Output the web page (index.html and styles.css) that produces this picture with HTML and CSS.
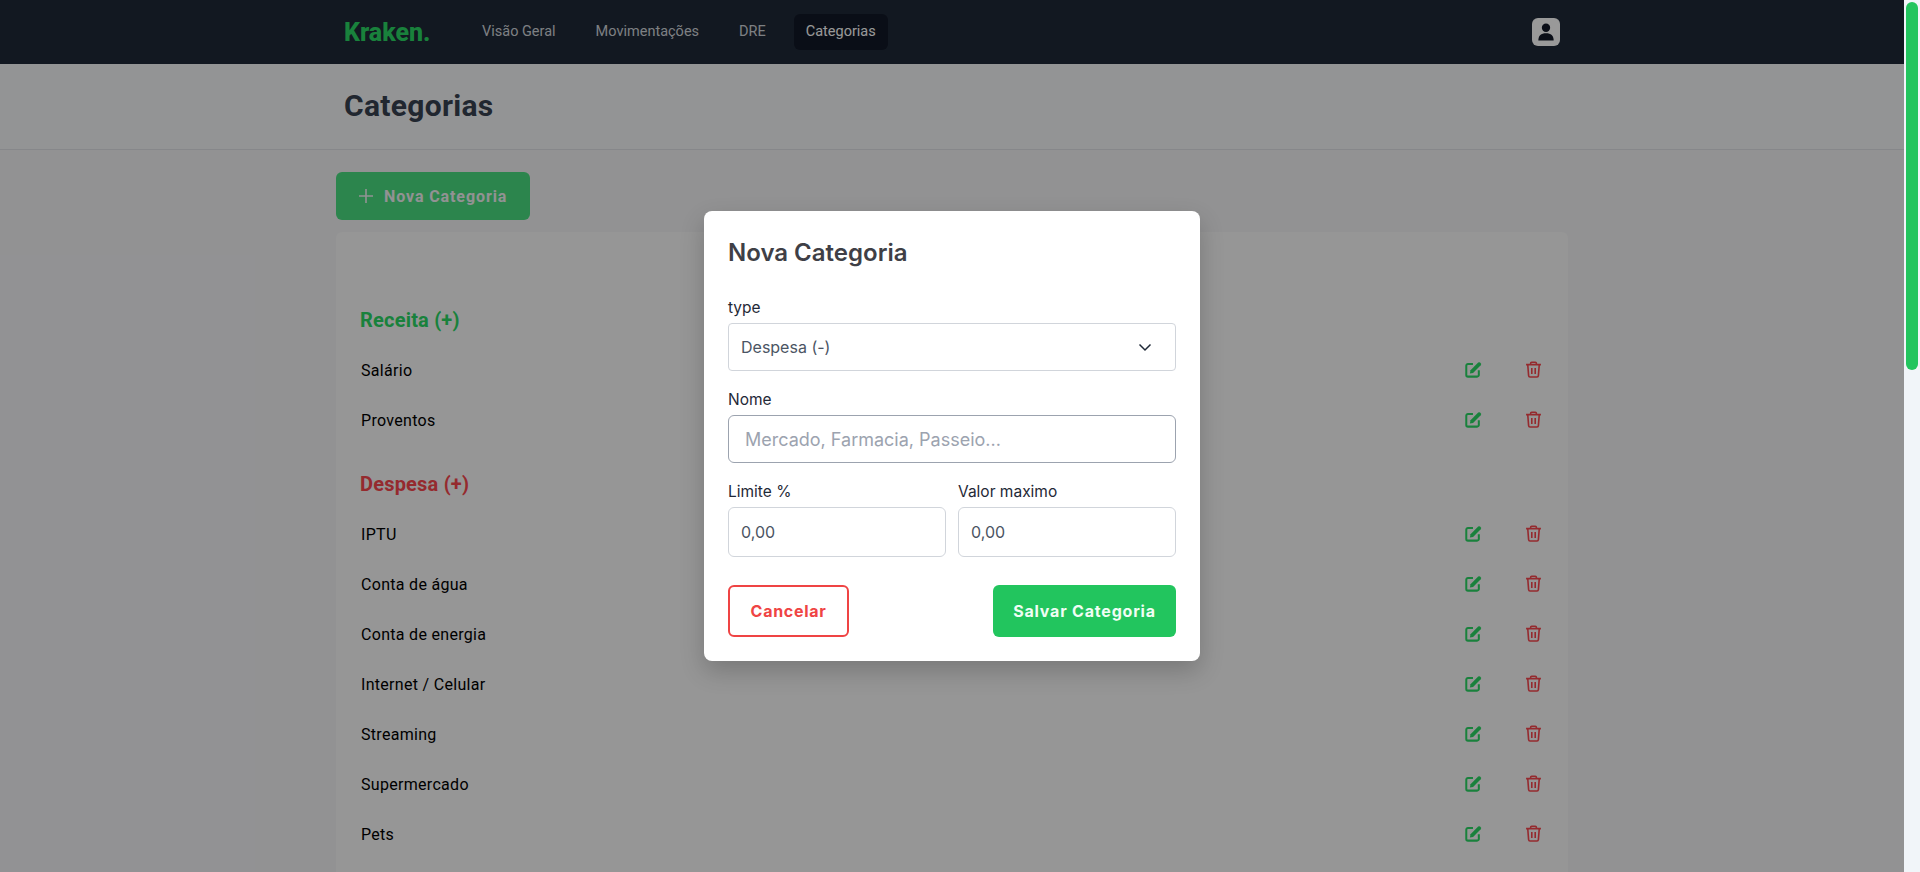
FILE: index.html
```html
<!DOCTYPE html>
<html lang="pt-BR">
<head>
    <meta charset="utf-8" />
    <title>Kraken - Categorias</title>
    <link rel="stylesheet" href="styles.css">
</head>
<body>
    <div class="viewport">
        <nav class="topbar">
            <div class="topbar-inner">
                <span class="logo">Kraken.</span>
                <div class="menu">
                    <a class="menu-item">Visão Geral</a>
                    <a class="menu-item">Movimentações</a>
                    <a class="menu-item">DRE</a>
                    <a class="menu-item active">Categorias</a>
                </div>
                <span class="avatar">
                    <svg viewBox="0 0 16 16" width="18" height="18"><circle cx="8" cy="4.2" r="3.7" fill="#111827"/><path d="M1.2 15.5c0-4.2 2.4-6.3 6.8-6.3s6.8 2.1 6.8 6.3z" fill="#111827"/></svg>
                </span>
            </div>
        </nav>

        <header class="page-title">
            <h1>Categorias</h1>
        </header>

        <main class="content">
            <button class="new-btn">
                <svg viewBox="0 0 16 16" width="16" height="16"><path d="M8 1v14M1 8h14" stroke="currentColor" stroke-width="1.6" fill="none"/></svg>
                Nova Categoria
            </button>
            <section class="panel">
                <h2 class="group income">Receita (+)</h2>
                <div class="row"><span>Salário</span><span class="actions"><svg class="ico ico-edit" viewBox="0 0 16 16"><use href="#edit"/></svg><svg class="ico ico-trash" viewBox="0 0 16 16"><use href="#trash"/></svg></span></div>
                <div class="row"><span>Proventos</span><span class="actions"><svg class="ico ico-edit" viewBox="0 0 16 16"><use href="#edit"/></svg><svg class="ico ico-trash" viewBox="0 0 16 16"><use href="#trash"/></svg></span></div>
                <h2 class="group expense">Despesa (+)</h2>
                <div class="row"><span>IPTU</span><span class="actions"><svg class="ico ico-edit" viewBox="0 0 16 16"><use href="#edit"/></svg><svg class="ico ico-trash" viewBox="0 0 16 16"><use href="#trash"/></svg></span></div>
                <div class="row"><span>Conta de água</span><span class="actions"><svg class="ico ico-edit" viewBox="0 0 16 16"><use href="#edit"/></svg><svg class="ico ico-trash" viewBox="0 0 16 16"><use href="#trash"/></svg></span></div>
                <div class="row"><span>Conta de energia</span><span class="actions"><svg class="ico ico-edit" viewBox="0 0 16 16"><use href="#edit"/></svg><svg class="ico ico-trash" viewBox="0 0 16 16"><use href="#trash"/></svg></span></div>
                <div class="row"><span>Internet / Celular</span><span class="actions"><svg class="ico ico-edit" viewBox="0 0 16 16"><use href="#edit"/></svg><svg class="ico ico-trash" viewBox="0 0 16 16"><use href="#trash"/></svg></span></div>
                <div class="row"><span>Streaming</span><span class="actions"><svg class="ico ico-edit" viewBox="0 0 16 16"><use href="#edit"/></svg><svg class="ico ico-trash" viewBox="0 0 16 16"><use href="#trash"/></svg></span></div>
                <div class="row"><span>Supermercado</span><span class="actions"><svg class="ico ico-edit" viewBox="0 0 16 16"><use href="#edit"/></svg><svg class="ico ico-trash" viewBox="0 0 16 16"><use href="#trash"/></svg></span></div>
                <div class="row"><span>Pets</span><span class="actions"><svg class="ico ico-edit" viewBox="0 0 16 16"><use href="#edit"/></svg><svg class="ico ico-trash" viewBox="0 0 16 16"><use href="#trash"/></svg></span></div>
            </section>
        </main>

        <svg class="defs" width="0" height="0">
            <symbol id="edit" viewBox="0 0 16 16">
                <path d="M7.5 2.9H2.8A1.6 1.6 0 0 0 1.2 4.5v8.6a1.6 1.6 0 0 0 1.6 1.6h8.6a1.6 1.6 0 0 0 1.6-1.6V8.6" fill="none" stroke="currentColor" stroke-width="1.9"/>
                <path d="M4.6 11.8l.6-3.1L12.4 1.5a1.3 1.3 0 0 1 1.8 0l.6.6a1.3 1.3 0 0 1 0 1.8L7.6 11.2z" fill="currentColor"/>
            </symbol>
            <symbol id="trash" viewBox="0 0 16 16">
                <path d="M1 3.4h14M5.3 3.2V2.2a1 1 0 0 1 1-1h3.4a1 1 0 0 1 1 1v1M2.6 3.6l.8 10.2a1.3 1.3 0 0 0 1.3 1.2h6.6a1.3 1.3 0 0 0 1.3-1.2l.8-10.2M6.4 6.6v5.6M9.6 6.6v5.6" fill="none" stroke="currentColor" stroke-width="1.5"/>
            </symbol>
        </svg>

        <div class="overlay">
            <form class="modal">
                <h3 class="modal-title">Nova Categoria</h3>
                <label class="field">
                    <span class="field-label">type</span>
                    <span class="select">
                        Despesa (-)
                        <svg viewBox="0 0 16 16" width="16" height="16"><path d="M2.5 5.5L8 11l5.5-5.5" fill="none" stroke="#1f2937" stroke-width="1.5"/></svg>
                    </span>
                </label>
                <label class="field">
                    <span class="field-label">Nome</span>
                    <input class="input input-name" placeholder="Mercado, Farmacia, Passeio...">
                </label>
                <div class="field-pair">
                    <label class="field">
                        <span class="field-label">Limite %</span>
                        <input class="input input-num" value="0,00">
                    </label>
                    <label class="field">
                        <span class="field-label">Valor maximo</span>
                        <input class="input input-num" value="0,00">
                    </label>
                </div>
                <div class="modal-actions">
                    <button type="button" class="btn btn-cancel">Cancelar</button>
                    <button type="button" class="btn btn-save">Salvar Categoria</button>
                </div>
            </form>
        </div>
    </div>

    <div class="scrollbar"><div class="scrollbar-thumb"></div></div>
</body>
</html>
```

FILE: styles.css
```css
* {
    box-sizing: border-box;
    margin: 0;
    padding: 0;
}

body {
    height: 100vh;
    overflow: hidden;
    display: flex;
    background-color: #f3f4f6;
    font-family: "Roboto", sans-serif;
    color: #000;
}

.viewport {
    position: relative;
    flex: 1;
    overflow: hidden;
}

/* the headless browser hides real scrollbars */
.scrollbar {
    width: 16px;
    padding: 2px;
    background-color: #f1f5f9;
}
.scrollbar-thumb {
    height: 368px;
    border-radius: 6px;
    background-color: #22c55e;
}

.topbar {
    height: 64px;
    background-color: #1f2937;
}
.topbar-inner {
    width: 1280px;
    height: 64px;
    margin: 0 auto;
    padding: 0 32px;
    display: flex;
    align-items: center;
}
.logo {
    font-size: 25px;
    font-weight: 800;
    color: #2ad864;
    width: 86px;
}
.menu {
    margin-left: 40px;
    display: flex;
    gap: 16px;
    flex: 1;
}
.menu-item {
    height: 36px;
    line-height: 36px;
    padding: 0 12px;
    border-radius: 6px;
    font-size: 14.5px;
    color: #d1d5db;
}
.menu-item.active {
    background-color: #111827;
    color: #fff;
}
.avatar {
    width: 28px;
    height: 28px;
    border-radius: 6px;
    background-color: #fff;
    display: flex;
    align-items: center;
    justify-content: center;
}

.page-title {
    height: 86px;
    background-color: #f6f7f8;
    border-bottom: 1px solid #e0e2e6;
}
.page-title h1 {
    width: 1280px;
    margin: 0 auto;
    padding: 24px 32px;
    font-size: 30px;
    line-height: 36px;
    font-weight: 700;
    letter-spacing: .3px;
    color: #374151;
}

.content {
    width: 1232px;
    margin: 22px auto 0;
}
.new-btn {
    height: 48px;
    width: 194px;
    padding: 0 22px;
    border: 0;
    border-radius: 6px;
    background-color: #4ade80;
    color: #f3f4f6;
    font-family: inherit;
    font-size: 16px;
    font-weight: 700;
    letter-spacing: .9px;
    display: flex;
    align-items: center;
    gap: 10px;
}
.panel {
    margin-top: 12px;
    padding: 74px 24px 0;
    border-radius: 6px;
    background-color: #fafafa;
    min-height: 1600px;
}
.group {
    height: 28px;
    line-height: 28px;
    margin-bottom: 11px;
    font-size: 20px;
    font-weight: 700;
    letter-spacing: .2px;
}
.group.income {
    color: #2ad864;
}
.group.expense {
    margin-top: 25px;
    color: #f8474e;
}
.row {
    height: 50px;
    display: flex;
    align-items: center;
    justify-content: space-between;
    font-size: 16px;
    letter-spacing: .3px;
    padding-left: 1px;
}
.actions {
    display: flex;
    gap: 43px;
    padding-right: 2px;
    margin-top: -2px;
}
.ico {
    width: 17px;
    height: 17px;
}
.ico-edit {
    color: #2ad864;
}
.ico-trash {
    color: #f8474e;
}
.defs {
    position: absolute;
}

.overlay {
    position: absolute;
    inset: 0;
    background-color: rgba(0, 0, 0, .4);
    display: flex;
    align-items: center;
    justify-content: center;
}
.modal {
    width: 496px;
    height: 450px;
    padding: 26px 24px 24px;
    border-radius: 8px;
    background-color: #fff;
    box-shadow: 0 10px 25px rgba(0, 0, 0, .2);
    font-family: "Inter", sans-serif;
}
.modal-title {
    font-size: 24px;
    line-height: 32px;
    font-weight: 600;
    color: #3f3f46;
    margin-bottom: 29px;
}
.field {
    display: flex;
    flex-direction: column;
    margin-bottom: 19px;
}
.field-label {
    font-size: 15.5px;
    line-height: 20px;
    color: #1f2937;
    margin-bottom: 5px;
}
.select {
    height: 48px;
    padding: 0 22px 0 12px;
    border: 1px solid #d1d5db;
    border-radius: 4px;
    font-size: 16px;
    color: #4b5563;
    display: flex;
    align-items: center;
    justify-content: space-between;
}
.input {
    height: 48px;
    border-radius: 6px;
    font-family: inherit;
    outline: none;
    width: 100%;
}
.input-name {
    padding: 0 16px;
    border: 1px solid #9ca3af;
    font-size: 18px;
}
.input-name::placeholder {
    color: #9ca3af;
}
.input-num {
    height: 50px;
    padding: 0 12px;
    border: 1px solid #d1d5db;
    font-size: 16px;
    color: #4b5563;
}
.field-pair {
    display: flex;
    gap: 12px;
}
.field-pair .field {
    flex: 1;
    margin-bottom: 0;
}
.modal-actions {
    display: flex;
    justify-content: space-between;
    margin-top: 28px;
}
.btn {
    height: 52px;
    border-radius: 6px;
    font-family: inherit;
    font-size: 16px;
    font-weight: 700;
    letter-spacing: .7px;
}
.btn-cancel {
    width: 121px;
    border: 2px solid #ef4444;
    background-color: #fff;
    color: #ef4444;
}
.btn-save {
    width: 183px;
    border: 0;
    background-color: #22c55e;
    color: #f0fdf4;
    letter-spacing: .8px;
}
```
